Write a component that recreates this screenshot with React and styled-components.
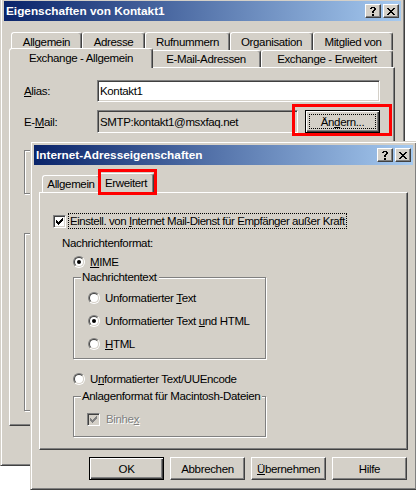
import React from "react";
import styled, { createGlobalStyle, css } from "styled-components";

const FACE = "#D4D0C8";
const SHADOW = "#808080";
const DARK = "#404040";

const GlobalStyle = createGlobalStyle`
  html, body {
    margin: 0;
    padding: 0;
    background: #fff;
  }
  body {
    width: 416px;
    height: 490px;
    overflow: hidden;
    font-family: "Liberation Sans", Arial, sans-serif;
    font-size: 11.5px;
    letter-spacing: -0.35px;
    color: #000;
  }
  u {
    text-underline-offset: 1px;
  }
`;

const Desktop = styled.div`
  position: relative;
  width: 416px;
  height: 490px;
  overflow: hidden;
`;

const Window = styled.div`
  position: absolute;
  left: ${({ $x }) => $x}px;
  top: ${({ $y }) => $y}px;
  width: ${({ $w }) => $w}px;
  height: ${({ $h }) => $h}px;
  box-sizing: border-box;
  display: flex;
  flex-direction: column;
  padding: 3px;
  background: ${FACE};
  border: 1px solid;
  border-color: ${FACE} ${DARK} ${DARK} ${FACE};
  box-shadow: inset 1px 1px 0 #fff, inset -1px -1px 0 ${SHADOW};
`;

const Caption = styled.div`
  flex: none;
  height: 20px;
  display: flex;
  align-items: center;
  padding: 0 2px 0 2px;
  background: linear-gradient(to right, #0a246a, #a6caf0);
  color: #fff;
  font-family: "Liberation Sans", Arial, sans-serif;
  font-weight: bold;
  font-size: 11.8px;
  letter-spacing: 0;
`;

const CaptionTitle = styled.span`
  flex: 1;
  white-space: nowrap;
`;

const CaptionButtons = styled.div`
  display: flex;
  gap: 2px;
`;

const CaptionButton = styled.div`
  width: 16px;
  height: 14px;
  box-sizing: border-box;
  display: flex;
  align-items: center;
  justify-content: center;
  background: ${FACE};
  border: 1px solid;
  border-color: #fff ${DARK} ${DARK} #fff;
  box-shadow: inset -1px -1px 0 ${SHADOW};
`;

const TabControl = styled.div`
  display: flex;
  flex-direction: column;
  margin: ${({ $top }) => $top}px ${({ $right }) => $right}px 0 5px;
`;

const TabRow = styled.div`
  display: flex;
  height: ${({ $h }) => $h}px;
  padding-left: ${({ $pad }) => $pad}px;
  position: relative;
  z-index: 1;
`;

const Tab = styled.div`
  position: relative;
  box-sizing: border-box;
  flex: none;
  width: ${({ $w }) => $w}px;
  height: 100%;
  display: flex;
  align-items: center;
  justify-content: center;
  white-space: nowrap;
  background: ${FACE};
  border: 1px solid;
  border-bottom: none;
  border-color: #fff ${DARK} transparent #fff;
  border-radius: 3px 3px 0 0;
  box-shadow: inset -1px 0 0 ${SHADOW};
  ${({ $active, $w }) =>
    $active &&
    css`
      width: ${$w + 4}px;
      height: calc(100% + 3px);
      margin: -2px -2px 0;
      padding-bottom: 2px;
      z-index: 2;
    `}
`;

const TabPanel = styled.div`
  box-sizing: border-box;
  height: ${({ $h }) => $h}px;
  display: flex;
  flex-direction: column;
  align-items: flex-start;
  padding: ${({ $pad }) => $pad};
  background: ${FACE};
  border: 1px solid;
  border-color: #fff ${DARK} ${DARK} #fff;
  box-shadow: inset -1px -1px 0 ${SHADOW};
`;

const Marker = styled.span`
  position: absolute;
  left: ${({ $l }) => $l}px;
  right: ${({ $r }) => $r}px;
  top: ${({ $t }) => $t}px;
  bottom: ${({ $b }) => $b}px;
  border: 3px solid #ff0000;
  pointer-events: none;
`;

const FormRow = styled.div`
  display: flex;
  align-items: center;
  height: ${({ $h }) => $h}px;
  margin-top: ${({ $mt }) => $mt || 0}px;
`;

const FieldLabel = styled.span`
  width: 73px;
  flex: none;
  white-space: nowrap;
`;

const EditBox = styled.div`
  box-sizing: border-box;
  width: ${({ $w }) => $w}px;
  height: 100%;
  display: flex;
  align-items: center;
  padding: 0 2px;
  white-space: nowrap;
  background: ${({ $readOnly }) => ($readOnly ? FACE : "#fff")};
  border: 1px solid;
  border-color: ${SHADOW} #fff #fff ${SHADOW};
  box-shadow: inset 1px 1px 0 ${DARK}, inset -1px -1px 0 ${FACE};
`;

const ButtonSlot = styled.span`
  position: relative;
  display: flex;
  height: 100%;
  margin-left: 7px;
`;

const PushButton = styled.button`
  box-sizing: border-box;
  width: 75px;
  height: 23px;
  margin: 0;
  padding: 3px;
  display: flex;
  align-items: stretch;
  justify-content: center;
  font: inherit;
  letter-spacing: inherit;
  color: #000;
  background: ${FACE};
  border: 1px solid;
  border-color: #fff ${DARK} ${DARK} #fff;
  box-shadow: inset -1px -1px 0 ${SHADOW};
  ${({ $default }) =>
    $default &&
    css`
      border-color: #000;
      box-shadow: inset 1px 1px 0 #fff, inset -1px -1px 0 ${DARK},
        inset -2px -2px 0 ${SHADOW};
    `}
`;

const ButtonText = styled.span`
  flex: 1;
  display: flex;
  align-items: center;
  justify-content: center;
  border: 1px solid ${({ $focus }) => ($focus ? "#000" : "transparent")};
  border-style: ${({ $focus }) => ($focus ? "dotted" : "solid")};
`;

const GroupBox = styled.fieldset`
  box-sizing: border-box;
  width: ${({ $w }) => $w}px;
  min-width: 0;
  height: ${({ $h }) => ($h ? `${$h}px` : "auto")};
  margin: ${({ $mt }) => $mt || 0}px 0 0 0;
  padding: 0;
  border: 1px solid ${SHADOW};
  box-shadow: inset 1px 1px 0 #fff, 1px 1px 0 #fff;
`;

const Legend = styled.legend`
  margin-left: 7px;
  padding: 0 2px 0 1px;
  line-height: 14px;
  background: ${FACE};
  white-space: nowrap;
`;

const GroupBody = styled.div`
  display: flex;
  flex-direction: column;
  align-items: flex-start;
  gap: ${({ $gap }) => $gap || 0}px;
  padding: ${({ $pad }) => $pad};
`;

const OptionRow = styled.div`
  display: flex;
  align-items: center;
  height: 16px;
  gap: ${({ $gap }) => $gap}px;
  margin-top: ${({ $mt }) => $mt || 0}px;
  white-space: nowrap;
`;

const Indent = styled.div`
  display: flex;
  flex-direction: column;
  align-items: flex-start;
  margin-left: ${({ $l }) => $l}px;
`;

const PlainText = styled.div`
  line-height: 14px;
  margin-top: ${({ $mt }) => $mt || 0}px;
  white-space: nowrap;
`;

const FocusLabel = styled.span`
  line-height: 14px;
  padding: 0 1px;
  letter-spacing: -0.45px;
  border: 1px dotted #000;
`;

const DisabledText = styled.span`
  color: ${SHADOW};
  text-shadow: 1px 1px 0 #fff;
`;

const CheckBoxBox = styled.span`
  box-sizing: border-box;
  flex: none;
  width: 13px;
  height: 13px;
  display: flex;
  align-items: center;
  justify-content: center;
  background: ${({ $disabled }) => ($disabled ? FACE : "#fff")};
  border: 1px solid;
  border-color: ${SHADOW} #fff #fff ${SHADOW};
  box-shadow: inset 1px 1px 0 ${DARK}, inset -1px -1px 0 ${FACE};
`;

const RadioOuter = styled.span`
  box-sizing: border-box;
  flex: none;
  width: 12px;
  height: 12px;
  display: flex;
  border-radius: 50%;
  border: 1px solid;
  border-color: ${SHADOW} #fff #fff ${SHADOW};
`;

const RadioInner = styled.span`
  flex: 1;
  display: flex;
  align-items: center;
  justify-content: center;
  border-radius: 50%;
  background: #fff;
  border: 1px solid;
  border-color: ${DARK} ${FACE} ${FACE} ${DARK};
`;

const RadioDot = styled.span`
  width: 4px;
  height: 4px;
  border-radius: 50%;
  background: #000;
`;

const ButtonBar = styled.div`
  display: flex;
  justify-content: flex-end;
  gap: 6px;
  margin: 7px 6px 0 0;
`;

function HelpGlyph() {
  return (
    <svg width="6" height="9" viewBox="0 0 6 9" shapeRendering="crispEdges">
      <path
        d="M1 0h4v1H1zM0 1h2v1H0zM4 1h2v2H4zM3 3h2v1H3zM2 4h2v2H2zM2 7h2v2H2z"
        fill="#000"
      />
    </svg>
  );
}

function CloseGlyph() {
  return (
    <svg width="8" height="7" viewBox="0 0 8 7" shapeRendering="crispEdges">
      <path
        d="M0 0h2v1H0zM6 0h2v1H6zM1 1h2v1H1zM5 1h2v1H5zM2 2h4v1H2zM3 3h2v1H3zM2 4h4v1H2zM1 5h2v1H1zM5 5h2v1H5zM0 6h2v1H0zM6 6h2v1H6z"
        fill="#000"
      />
    </svg>
  );
}

function CheckGlyph({ color }) {
  const starts = [2, 3, 4, 3, 2, 1, 0];
  const d = starts.map((y, x) => `M${x} ${y}h1v3h-1z`).join("");
  return (
    <svg width="7" height="7" viewBox="0 0 7 7" shapeRendering="crispEdges">
      <path d={d} fill={color} />
    </svg>
  );
}

function CheckBox({ checked, disabled }) {
  return (
    <CheckBoxBox $disabled={disabled}>
      {checked && <CheckGlyph color={disabled ? SHADOW : "#000"} />}
    </CheckBoxBox>
  );
}

function Radio({ checked }) {
  return (
    <RadioOuter>
      <RadioInner>{checked && <RadioDot />}</RadioInner>
    </RadioOuter>
  );
}

function TitleBar({ title }) {
  return (
    <Caption>
      <CaptionTitle>{title}</CaptionTitle>
      <CaptionButtons>
        <CaptionButton>
          <HelpGlyph />
        </CaptionButton>
        <CaptionButton>
          <CloseGlyph />
        </CaptionButton>
      </CaptionButtons>
    </Caption>
  );
}

const outerTabsBack = [
  { label: "Allgemein", w: 71 },
  { label: "Adresse", w: 63 },
  { label: "Rufnummern", w: 85 },
  { label: "Organisation", w: 83 },
  { label: "Mitglied von", w: 80 },
];

const outerTabsFront = [
  { label: "Exchange - Allgemein", w: 140, active: true },
  { label: "E-Mail-Adressen", w: 110 },
  { label: "Exchange - Erweitert", w: 132 },
];

function ContactWindow() {
  return (
    <Window $x={0} $y={-3} $w={405} $h={469}>
      <TitleBar title="Eigenschaften von Kontakt1" />
      <TabControl $top={11} $right={6}>
        <TabRow $h={18} $pad={2}>
          {outerTabsBack.map((t) => (
            <Tab key={t.label} $w={t.w}>
              {t.label}
            </Tab>
          ))}
        </TabRow>
        <TabRow $h={17} $pad={2}>
          {outerTabsFront.map((t) => (
            <Tab key={t.label} $w={t.w} $active={t.active}>
              {t.label}
            </Tab>
          ))}
        </TabRow>
        <TabPanel $h={359} $pad="12px 14px 0 14px">
          <FormRow $h={22}>
            <FieldLabel>
              <u>A</u>lias:
            </FieldLabel>
            <EditBox $w={283}>Kontakt1</EditBox>
          </FormRow>
          <FormRow $h={23} $mt={8}>
            <FieldLabel>
              E-<u>M</u>ail:
            </FieldLabel>
            <EditBox $w={201} $readOnly>
              SMTP:kontakt1@msxfaq.net
            </EditBox>
            <ButtonSlot>
              <PushButton $default>
                <ButtonText $focus>
                  Än<u>d</u>ern...
                </ButtonText>
              </PushButton>
              <Marker $l={-13} $r={-12} $t={-6} $b={-3} />
            </ButtonSlot>
          </FormRow>
          <GroupBox $w={356} $h={44} $mt={17} />
          <GroupBox $w={356} $h={178} $mt={39} />
        </TabPanel>
      </TabControl>
    </Window>
  );
}

function InternetWindow() {
  return (
    <Window $x={30} $y={141} $w={387} $h={349}>
      <TitleBar title="Internet-Adresseigenschaften" />
      <TabControl $top={10} $right={5}>
        <TabRow $h={17} $pad={3}>
          <Tab $w={58}>Allgemein</Tab>
          <Tab $w={52} $active>
            Erweitert
            <Marker $l={-1} $r={-4} $t={-5} $b={-2} />
          </Tab>
        </TabRow>
        <TabPanel $h={258} $pad="20px 0 0 13px">
          <OptionRow $gap={2}>
            <CheckBox checked />
            <FocusLabel>
              Einstell. von <u>I</u>nternet Mail-Dienst für Empfänger außer Kraft
            </FocusLabel>
          </OptionRow>
          <Indent $l={9}>
            <PlainText $mt={7}>Nachrichtenformat:</PlainText>
            <Indent $l={11}>
              <OptionRow $gap={5} $mt={4}>
                <Radio checked />
                <span>
                  <u>M</u>IME
                </span>
              </OptionRow>
              <GroupBox $w={193}>
                <Legend>Nachrichtentext</Legend>
                <GroupBody $pad="6px 0 6px 14px" $gap={7}>
                  <OptionRow $gap={5}>
                    <Radio />
                    <span>
                      Unformatierter <u>T</u>ext
                    </span>
                  </OptionRow>
                  <OptionRow $gap={5}>
                    <Radio checked />
                    <span>
                      Unformatierter Text <u>u</u>nd HTML
                    </span>
                  </OptionRow>
                  <OptionRow $gap={5}>
                    <Radio />
                    <span>
                      <u>H</u>TML
                    </span>
                  </OptionRow>
                </GroupBody>
              </GroupBox>
              <OptionRow $gap={5} $mt={12}>
                <Radio />
                <span>
                  U<u>n</u>formatierter Text/UUEncode
                </span>
              </OptionRow>
              <GroupBox $w={193} $mt={2}>
                <Legend>Anlagenformat für Macintosh-Dateien</Legend>
                <GroupBody $pad="8px 0 9px 13px">
                  <OptionRow $gap={6}>
                    <CheckBox checked disabled />
                    <DisabledText>
                      Binhe<u>x</u>
                    </DisabledText>
                  </OptionRow>
                </GroupBody>
              </GroupBox>
            </Indent>
          </Indent>
        </TabPanel>
      </TabControl>
      <ButtonBar>
        <PushButton $default>
          <ButtonText>OK</ButtonText>
        </PushButton>
        <PushButton>
          <ButtonText>Abbrechen</ButtonText>
        </PushButton>
        <PushButton>
          <ButtonText>
            <u>Ü</u>bernehmen
          </ButtonText>
        </PushButton>
        <PushButton>
          <ButtonText>Hilfe</ButtonText>
        </PushButton>
      </ButtonBar>
    </Window>
  );
}

export default function App() {
  return (
    <>
      <GlobalStyle />
      <Desktop>
        <ContactWindow />
        <InternetWindow />
      </Desktop>
    </>
  );
}
